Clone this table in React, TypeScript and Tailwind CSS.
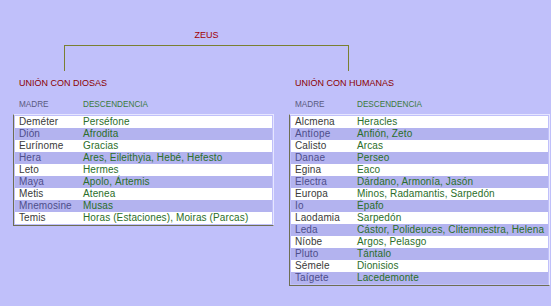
const diosas: [string, string][] = [
  ["Deméter", "Perséfone"],
  ["Dión", "Afrodita"],
  ["Eurínome", "Gracias"],
  ["Hera", "Ares, Eileithyia, Hebé, Hefesto"],
  ["Leto", "Hermes"],
  ["Maya", "Apolo, Ártemis"],
  ["Metis", "Atenea"],
  ["Mnemosine", "Musas"],
  ["Temis", "Horas (Estaciones), Moiras (Parcas)"],
];

const humanas: [string, string][] = [
  ["Alcmena", "Heracles"],
  ["Antíope", "Anfión, Zeto"],
  ["Calisto", "Arcas"],
  ["Danae", "Perseo"],
  ["Egina", "Eaco"],
  ["Electra", "Dárdano, Armonía, Jasón"],
  ["Europa", "Minos, Radamantis, Sarpedón"],
  ["Io", "Épafo"],
  ["Laodamia", "Sarpedón"],
  ["Leda", "Cástor, Polideuces, Clitemnestra, Helena"],
  ["Níobe", "Argos, Pelasgo"],
  ["Pluto", "Tántalo"],
  ["Sémele", "Dionisios"],
  ["Taígete", "Lacedemonte"],
];

function Union({ title, rows, right }: { title: string; rows: [string, string][]; right?: boolean }) {
  const cols = right ? "grid-cols-[62px_1fr]" : "grid-cols-[64px_1fr]";
  return (
    <div className="w-[261px] flex flex-col">
      <div className="mt-[6px] h-[12px] leading-[12px] pl-[6px] text-[9px] text-[#8b0000]">{title}</div>
      <div className={`mt-[10px] h-[12px] leading-[12px] pl-[6px] text-[8.2px] grid ${cols}`}>
        <span className="text-[#5a5a80]">MADRE</span>
        <span className="text-[#3a7a3a]">DESCENDENCIA</span>
      </div>
      <div className="mt-[3px] border border-t-[#e6e6ff] border-r-[#e6e6ff] border-l-[#6e6e52] border-b-[#6e6e52] p-px">
        {rows.map(([m, d], i) => (
          <div
            key={m}
            className={`grid ${cols} h-[12px] leading-[12px] pl-[4px] text-[10px] tracking-[0.12px] ${
              i % 2 === 0 ? "bg-white text-[#3a3a3a]" : "bg-[#b3b3ef] text-[#4e4e8a]"
            }`}
          >
            <span>{m}</span>
            <span className="text-[#2a6e2a] whitespace-nowrap">{d}</span>
          </div>
        ))}
      </div>
    </div>
  );
}

export default function App() {
  return (
    <div className="w-[551px] h-[306px] bg-[#c0c0fa] overflow-hidden font-['Liberation_Sans',Arial,sans-serif] pt-[29px]">
      <div className="ml-[64px] w-[285px] flex flex-col items-center">
        <div className="h-[12px] leading-[12px] text-[9px] text-[#a00000]">ZEUS</div>
      </div>
      <div className="mt-[4px] ml-[64px] w-[285px] h-[26px] border-t border-l border-r border-[#7a8030]" />
      <div className="flex gap-[15px] ml-[13px]">
        <Union title="UNIÓN CON DIOSAS" rows={diosas} />
        <Union title="UNIÓN CON HUMANAS" rows={humanas} right />
      </div>
    </div>
  );
}
